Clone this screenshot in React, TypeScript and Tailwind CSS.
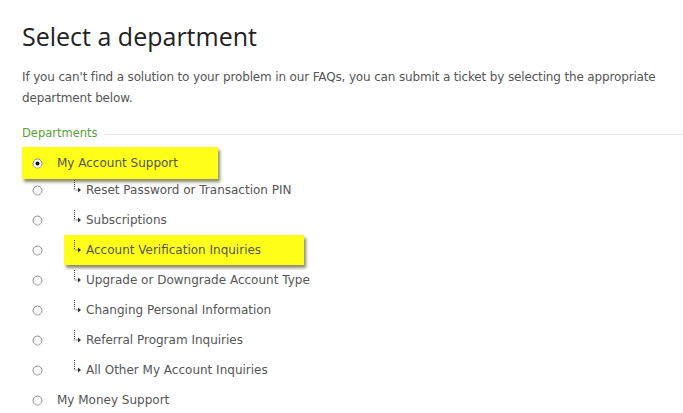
const items = [
  { label: "My Account Support", sub: false, checked: true, hl: true },
  { label: "Reset Password or Transaction PIN", sub: true },
  { label: "Subscriptions", sub: true },
  { label: "Account Verification Inquiries", sub: true, hl: true },
  { label: "Upgrade or Downgrade Account Type", sub: true },
  { label: "Changing Personal Information", sub: true },
  { label: "Referral Program Inquiries", sub: true },
  { label: "All Other My Account Inquiries", sub: true },
  { label: "My Money Support", sub: false },
];

function Radio({ checked }: { checked?: boolean }) {
  return (
    <svg width="11" height="11" viewBox="0 0 11 11" className="shrink-0">
      <circle cx="5.5" cy="5.5" r="4.5" fill="#fbfbfb" stroke="#8a8a8a" strokeWidth="1" />
      <path d="M2 7.5 A4 4 0 0 0 9 7.5" fill="none" stroke="#d8d8d8" strokeWidth="1" />
      {checked && <circle cx="5.5" cy="5.5" r="2" fill="#111" />}
    </svg>
  );
}

function SubArrow() {
  return (
    <svg width="12" height="16" viewBox="0 0 12 16" className="-mt-[6px] shrink-0">
      <path d="M2.5 1 V11 H6" fill="none" stroke="#444" strokeWidth="1" strokeDasharray="1 1" />
      <path d="M6 8.5 L9 11 L6 13.5 Z" fill="#333" />
    </svg>
  );
}

export default function App() {
  return (
    <div className="h-[413px] w-[683px] overflow-hidden bg-white pl-[22px] pt-[19px] font-['DejaVu_Sans',sans-serif] text-[#555]">
      <h1 className="font-['Open_Sans',sans-serif] text-[25px] leading-[34px] text-[#222]">Select a department</h1>
      <p className="mt-[14px] text-[12px] leading-[21px] tracking-[-0.15px]">
        If you can't find a solution to your problem in our FAQs, you can submit a ticket by selecting the appropriate department below.
      </p>
      <div className="mt-[16px] flex items-center">
        <span className="text-[11.5px] leading-[16px] text-[#5aa03a]">Departments</span>
        <div className="ml-[7px] mt-[3px] h-px flex-1 bg-[#e6e6e6]" />
      </div>
      <div className="mt-[10px] flex flex-col">
        {items.map((it, i) => (
          <div key={i} className={`flex items-center ${i === 0 ? "h-[24px]" : "h-[30px]"}`}>
            {it.sub ? (
              <>
                <div className="flex w-[42px] pl-[10px]">
                  <Radio />
                </div>
                <div
                  className={`flex items-center py-[7px] pl-[8px] pr-[43px] ${
                    it.hl ? "bg-[#ffff1a] shadow-[2px_3px_3px_rgba(60,60,0,0.6)]" : ""
                  }`}
                >
                  <SubArrow />
                  <span className="ml-[2px] text-[12px] leading-[16px]">{it.label}</span>
                </div>
              </>
            ) : (
              <div
                className={`flex items-center py-[8px] pl-[10px] pr-[40px] ${
                  it.hl ? "bg-[#ffff1a] shadow-[2px_3px_3px_rgba(60,60,0,0.6)]" : ""
                }`}
              >
                <Radio checked={it.checked} />
                <span className="ml-[14px] text-[12px] leading-[16px]">{it.label}</span>
              </div>
            )}
          </div>
        ))}
      </div>
    </div>
  );
}
